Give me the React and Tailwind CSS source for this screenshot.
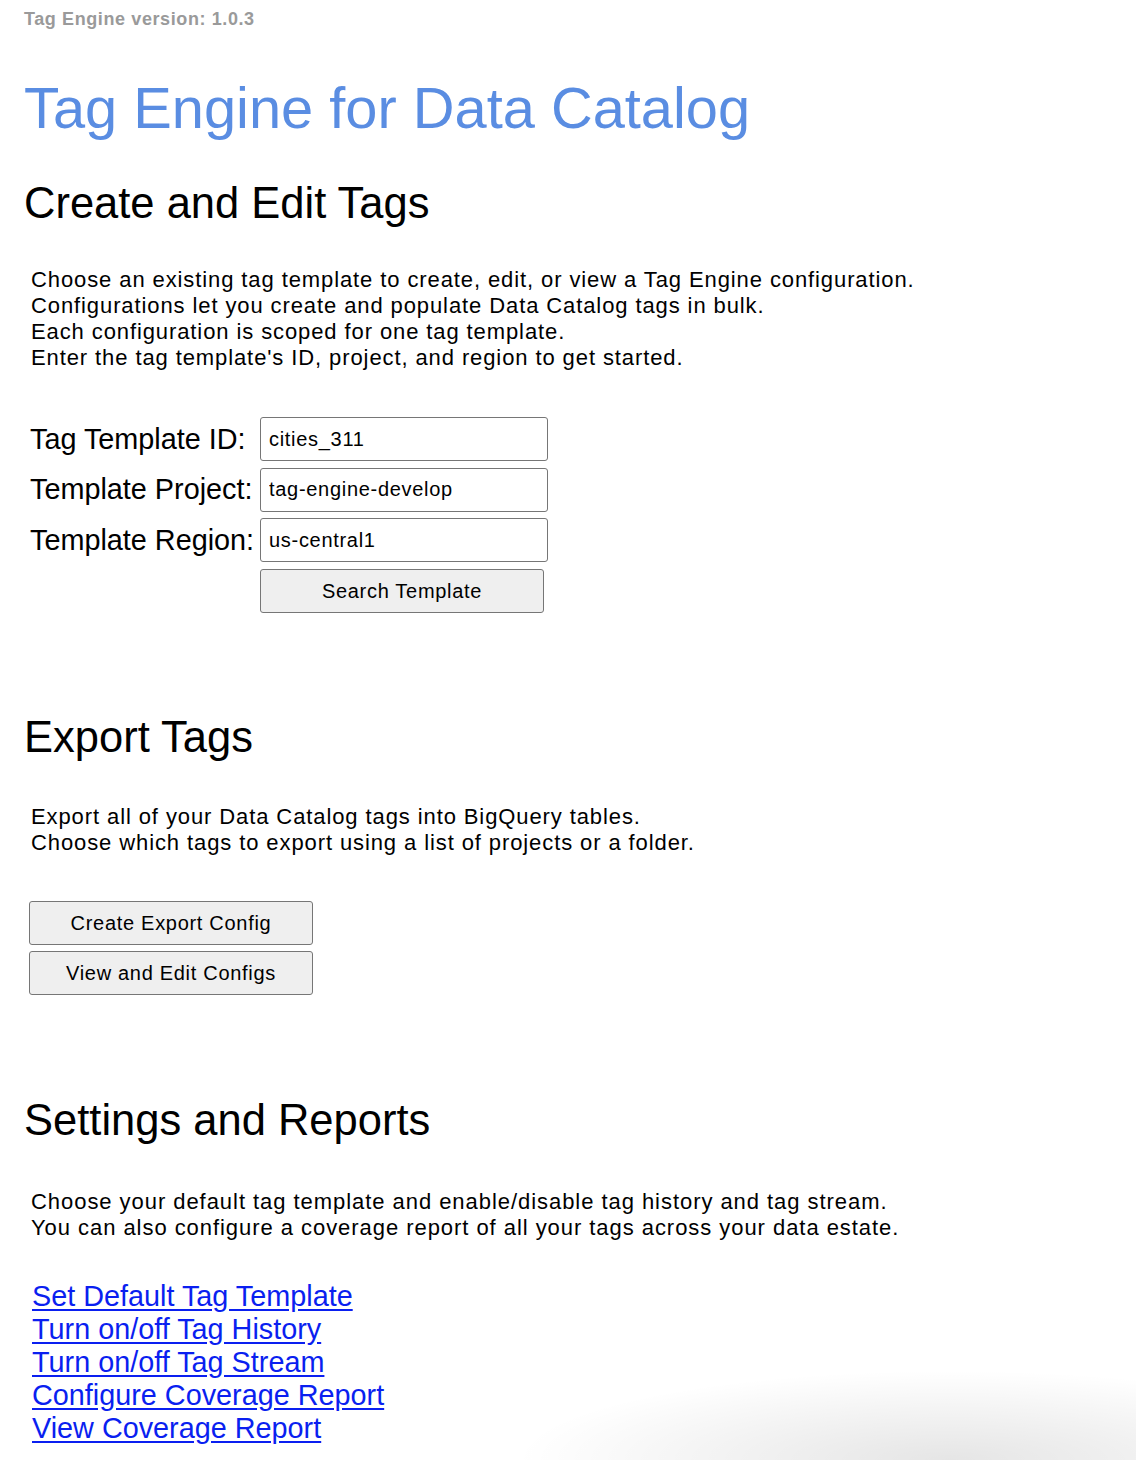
import { useState } from 'react';

const font = { fontFamily: '"Liberation Sans", Arial, Helvetica, sans-serif' };

export default function App() {
  const [form, setForm] = useState({
    templateId: 'cities_311',
    project: 'tag-engine-develop',
    region: 'us-central1',
  });
  const handle = (e) => setForm(f => ({ ...f, [e.target.name]: e.target.value }));

  const links = [
    'Set Default Tag Template',
    'Turn on/off Tag History',
    'Turn on/off Tag Stream',
    'Configure Coverage Report',
    'View Coverage Report',
  ];

  return (
    <div className="relative min-h-[1460px] overflow-hidden bg-white text-black font-['Liberation_Sans',Arial,sans-serif]">
      <div className="pl-[24px] pt-[9px]">
        <div className="text-[18px] leading-[20px] tracking-[0.6px] font-bold text-[#9a9a9a]">Tag Engine version: 1.0.3</div>

        <h1 className="mt-[44px] text-[57.8px] leading-[70px] font-normal text-[#5a8de2]">Tag Engine for Data Catalog</h1>

        {/* create / edit */}
        <h2 className="mt-[34px] text-[43.5px] leading-[52px] font-normal">Create and Edit Tags</h2>
        <p className="mt-[38px] pl-[7px] text-[22px] leading-[26px] tracking-[0.9px]">
          Choose an existing tag template to create, edit, or view a Tag Engine configuration.<br />
          Configurations let you create and populate Data Catalog tags in bulk.<br />
          Each configuration is scoped for one tag template.<br />
          Enter the tag template's ID, project, and region to get started.
        </p>
        <form onSubmit={e => e.preventDefault()} className="mt-[46px] pl-[6px] grid grid-cols-[230px_auto] gap-y-[6.5px] justify-start">
          <label className="self-center text-[28.8px] leading-[33px]">Tag Template ID:</label>
          <input name="templateId" value={form.templateId} onChange={handle} className="w-[288px] h-[44px] border border-[#767676] rounded-[3px] px-[8px] text-[20px] tracking-[0.7px] outline-none" style={font} />
          <label className="self-center text-[28.8px] leading-[33px]">Template Project:</label>
          <input name="project" value={form.project} onChange={handle} className="w-[288px] h-[44px] border border-[#767676] rounded-[3px] px-[8px] text-[20px] tracking-[0.7px] outline-none" style={font} />
          <label className="self-center text-[28.8px] leading-[33px]">Template Region:</label>
          <input name="region" value={form.region} onChange={handle} className="w-[288px] h-[44px] border border-[#767676] rounded-[3px] px-[8px] text-[20px] tracking-[0.7px] outline-none" style={font} />
          <div />
          <button className="w-[284px] h-[44px] border border-[#767676] rounded-[3px] bg-[#efefef] text-[20px] tracking-[0.7px]">Search Template</button>
        </form>

        {/* export */}
        <h2 className="mt-[98px] text-[43.5px] leading-[52px] font-normal">Export Tags</h2>
        <p className="mt-[41px] pl-[7px] text-[22px] leading-[26px] tracking-[0.9px]">
          Export all of your Data Catalog tags into BigQuery tables.<br />
          Choose which tags to export using a list of projects or a folder.
        </p>
        <div className="mt-[45px] pl-[5px] flex flex-col gap-[6px] items-start">
          <button className="w-[284px] h-[44px] border border-[#767676] rounded-[3px] bg-[#efefef] text-[20px] tracking-[0.7px]">Create Export Config</button>
          <button className="w-[284px] h-[44px] border border-[#767676] rounded-[3px] bg-[#efefef] text-[20px] tracking-[0.7px]">View and Edit Configs</button>
        </div>

        {/* settings */}
        <h2 className="mt-[99px] text-[43.5px] leading-[52px] font-normal">Settings and Reports</h2>
        <p className="mt-[43px] pl-[7px] text-[22px] leading-[26px] tracking-[0.95px]">
          Choose your default tag template and enable/disable tag history and tag stream.<br />
          You can also configure a coverage report of all your tags across your data estate.
        </p>
        <div className="mt-[39px] pl-[8px] flex flex-col items-start">
          {links.map(l => (
            <a key={l} href="#" className="text-[28.8px] leading-[33px] text-[#0a1ff0] underline underline-offset-[3px]">{l}</a>
          ))}
        </div>
      </div>

      {/* window shadow at the bottom edge */}
      <div className="pointer-events-none absolute bottom-0 right-0 w-[620px] h-[90px] bg-[radial-gradient(ellipse_70%_100%_at_70%_100%,rgba(0,0,0,0.1),rgba(0,0,0,0)_100%)]" />
    </div>
  );
}
